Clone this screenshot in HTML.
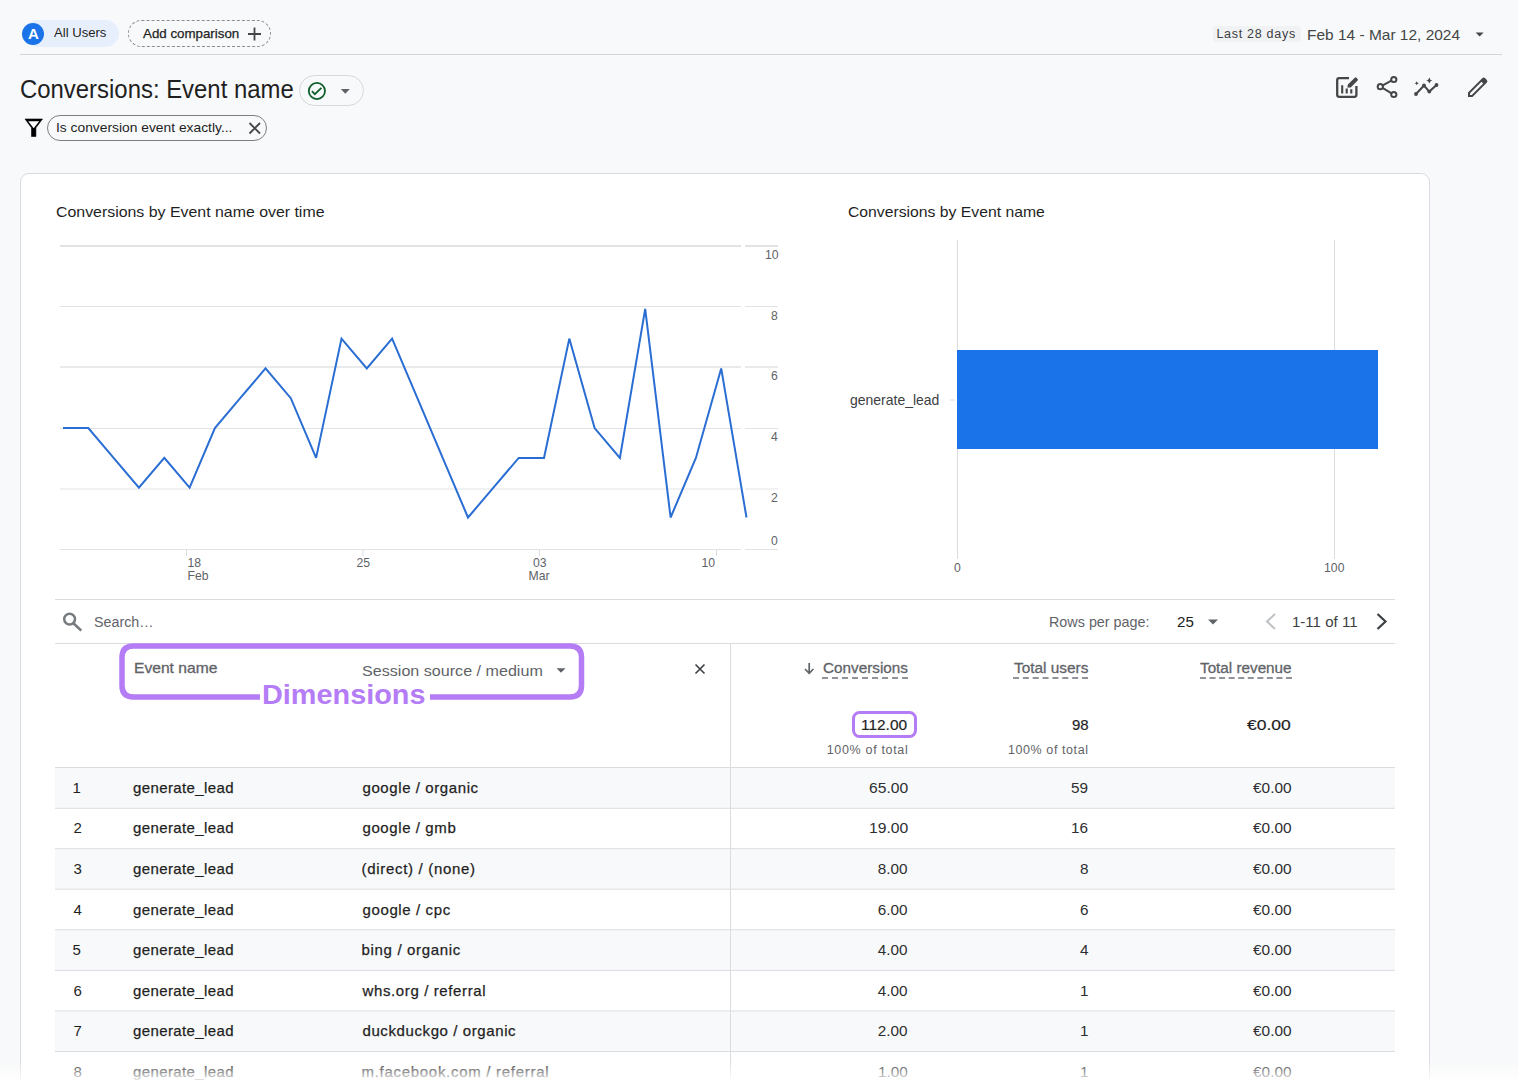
<!DOCTYPE html>
<html><head><meta charset="utf-8">
<style>
html,body{margin:0;padding:0;width:1518px;height:1092px;overflow:hidden;background:#f8f9fa;}
body{position:relative;font-family:"Liberation Sans",sans-serif;}
.t{position:absolute;white-space:nowrap;line-height:1;transform-origin:0 0;}
.a{position:absolute;}
svg{position:absolute;left:0;top:0;}
</style></head><body>
<!-- header -->
<div class="a" style="left:24px;top:20px;width:95px;height:27px;border-radius:14px;background:#e8effc;"></div>
<div class="a" style="left:22px;top:22.7px;width:22px;height:22px;border-radius:50%;background:#1a73e8;"></div>
<div class="a" style="left:128px;top:20px;width:141px;height:25px;border-radius:14px;border:1px dashed #8a8d91;"></div>
<div class="a" style="left:20px;top:54px;width:1482px;height:1px;background:#d3d5d8;"></div>
<div class="a" style="left:1213px;top:26px;width:88px;height:16px;background:#f1f2f4;border-radius:2px;"></div>
<!-- title pill -->
<div class="a" style="left:298.5px;top:75px;width:63px;height:29px;border-radius:16px;border:1px solid #d6d8dc;"></div>
<!-- filter chip -->
<div class="a" style="left:47px;top:115px;width:218px;height:24px;border-radius:13px;border:1px solid #7c7f83;"></div>
<!-- card -->
<div class="a" style="left:20px;top:173px;width:1408px;height:1000px;border-radius:9px;border:1px solid #d9dbde;background:#fff;"></div>
<svg width="1518" height="1092" viewBox="0 0 1518 1092">
  <!-- header icons -->
  <g stroke="#444746" stroke-width="1.8" fill="none" stroke-linecap="butt">
    <path d="M248 34H261M254.5 27.5V40.5"/>
  </g>
  <path d="M1475.6 32.5L1483.6 32.5L1479.6 36.5Z" fill="#444746"/>
  <!-- check circle -->
  <circle cx="316.9" cy="91" r="8.1" stroke="#0f5f2c" stroke-width="1.8" fill="none"/>
  <path d="M311.9 91.2L314.8 94.2L321.4 87.8" stroke="#0f5f2c" stroke-width="1.8" fill="none"/>
  <path d="M340.8 89L349.8 89L345.3 93.7Z" fill="#5f6368"/>
  <!-- funnel -->
  <path d="M25 119H42.5L35.9 127.8V136.5H31.5V127.8Z" fill="#000" stroke="#000" stroke-width="0.6" stroke-linejoin="round"/>
  <path d="M28.2 121.2H39.2L33.7 128.2Z" fill="#fff"/>
  <!-- chip x -->
  <path d="M249.5 123L260 133.5M260 123L249.5 133.5" stroke="#444746" stroke-width="1.8"/>
  <!-- right icons -->
  <g fill="none" stroke="#444746" stroke-width="2.3" stroke-linejoin="round">
    <path d="M1349 78.2H1339.2Q1337.2 78.2 1337.2 80.2V94.8Q1337.2 96.8 1339.2 96.8H1354.4Q1356.4 96.8 1356.4 94.8V86"/>
    <path d="M1342.2 85.3V93.4M1346.7 88.6V93.4M1351.3 89.3V93.4" stroke-width="2.1" stroke-linejoin="miter"/>
  </g>
  <path d="M1347.3 87.6L1347.9 84.6L1354.8 77.7Q1355.6 76.9 1356.4 77.7L1357.6 78.9Q1358.4 79.7 1357.6 80.5L1350.7 87.4Z" fill="#444746"/>
  <g fill="none" stroke="#444746" stroke-width="2">
    <path d="M1380.5 86.7L1393.6 79.3M1380.5 86.7L1393.6 94.7"/>
    <circle cx="1393.8" cy="79.5" r="2.6" fill="#f8f9fa"/>
    <circle cx="1380.3" cy="86.7" r="2.6" fill="#f8f9fa"/>
    <circle cx="1393.8" cy="94.5" r="2.6" fill="#f8f9fa"/>
  </g>
  <g fill="#444746" stroke="#444746">
    <path d="M1416 94L1424 85.5L1429.3 91.6L1436.5 85" fill="none" stroke-width="2"/>
    <circle cx="1416" cy="94" r="1.9" stroke="none"/>
    <circle cx="1424" cy="85.5" r="1.9" stroke="none"/>
    <circle cx="1429.3" cy="91.6" r="1.9" stroke="none"/>
    <circle cx="1436.5" cy="85" r="1.9" stroke="none"/>
    <path d="M1429.3 77.5Q1429.8 80 1432.3 80.5Q1429.8 81 1429.3 83.5Q1428.8 81 1426.3 80.5Q1428.8 80 1429.3 77.5Z" stroke="none"/>
    <path d="M1416.7 81.2Q1417 82.9 1418.7 83.2Q1417 83.5 1416.7 85.2Q1416.4 83.5 1414.7 83.2Q1416.4 82.9 1416.7 81.2Z" stroke="none"/>
  </g>
  <path d="M1468 97V92.5L1482.2 78.3Q1483.7 76.8 1485.2 78.3L1486.7 79.8Q1488.2 81.3 1486.7 82.8L1472.5 97Z" fill="#444746"/>
  <path d="M1470 95V93.3L1481.5 81.8L1483.2 83.5L1471.7 95Z" fill="#f8f9fa"/>

  <!-- line chart grid -->
  <g stroke="#e2e3e5" stroke-width="1" fill="none">
    <path d="M60 246H741M745 246H778" stroke-width="2"/>
    <path d="M60 306.5H741M745 306.5H778"/>
    <path d="M60 367H741M745 367H778" stroke-width="1.6"/>
    <path d="M60 428.5H741M745 428.5H778"/>
    <path d="M60 489H741M745 489H778"/>
    <path d="M60 549.5H741M745 549.5H778"/>
    <path d="M186.5 550V556M363 550V556M539.5 550V556M716.5 550V556" stroke="#dadce0"/>
  </g>
  <polyline points="63.0,428.1 88.3,428.1 113.6,457.9 138.9,487.7 164.3,457.9 189.6,487.7 214.9,428.1 240.2,398.2 265.5,368.4 290.8,398.2 316.1,457.9 341.5,338.6 366.8,368.4 392.1,338.6 417.4,398.2 442.7,457.9 468.0,517.5 493.4,487.7 518.7,457.9 544.0,457.9 569.3,338.6 594.6,428.1 619.9,457.9 645.2,308.8 670.6,517.5 695.9,457.9 721.2,368.4 746.5,517.5" fill="none" stroke="#2a6dd3" stroke-width="2" stroke-linejoin="miter" stroke-miterlimit="2.5"/>
  <!-- bar chart -->
  <g stroke="#dadce0" stroke-width="1">
    <path d="M957.5 240V559M1334.5 240V559M950 400H955"/>
  </g>
  <rect x="957" y="350" width="421" height="99" fill="#1a73e8"/>
  <!-- table -->
  <g stroke="#dadce0" stroke-width="1" fill="none">
    <path d="M55 599.5H1395M55 643.5H1395"/>
  </g>
  <rect x="55" y="768" width="1340" height="40" fill="#f8f9fa"/>
  <rect x="55" y="849" width="1340" height="40" fill="#f8f9fa"/>
  <rect x="55" y="930" width="1340" height="40.5" fill="#f8f9fa"/>
  <rect x="55" y="1011.5" width="1340" height="40" fill="#f8f9fa"/>
  <g stroke="#dadce0" stroke-width="1" fill="none">
    <path d="M55 767.5H1395M55 808.3H1395M55 848.7H1395M55 889.2H1395M55 929.8H1395M55 970.4H1395M55 1011H1395M55 1051.5H1395"/>
    <path d="M730.5 643V1092"/>
  </g>
  <!-- search icon -->
  <circle cx="69.6" cy="619.1" r="5.4" stroke="#777b7f" stroke-width="2.5" fill="none"/>
  <path d="M73.4 623.2L81.3 630.6" stroke="#777b7f" stroke-width="2.6"/>
  <!-- rows caret -->
  <path d="M1208 619.5H1218L1213 624.5Z" fill="#5f6368"/>
  <path d="M1275 614L1267 621.5L1275 629" stroke="#bdc1c6" stroke-width="2" fill="none"/>
  <path d="M1377.5 614L1385.5 621.5L1377.5 629" stroke="#3c4043" stroke-width="2.2" fill="none"/>
  <!-- header -->
  <path d="M556.5 668.2H565.5L561 672.7Z" fill="#5f6368"/>
  <path d="M695.5 664.5L704.5 673.5M704.5 664.5L695.5 673.5" stroke="#3c4043" stroke-width="1.6"/>
  <path d="M809.2 663V673M805 669L809.2 673.3L813.4 669" stroke="#5f6368" stroke-width="1.7" fill="none"/>
  <!-- purple annotation -->
  <path d="M260 697H133.5Q122 697 122 685.5V657.5Q122 646 133.5 646H570Q581.5 646 581.5 657.5V685.5Q581.5 697 570 697H430" fill="none" stroke="#b47cf5" stroke-width="5.5"/>
  <rect x="853.5" y="712.5" width="62" height="24" rx="6" fill="none" stroke="#b47cf5" stroke-width="3"/>
</svg>
<div class="a" style="left:822px;top:677px;width:86px;height:0;border-bottom:2px dashed #90949a;"></div>
<div class="a" style="left:1013px;top:677px;width:75px;height:0;border-bottom:2px dashed #90949a;"></div>
<div class="a" style="left:1200px;top:677px;width:92px;height:0;border-bottom:2px dashed #90949a;"></div>
<div class=t style="left:53.80px;top:26px;font-size:13.3px;color:#1f1f1f;transform:scaleX(0.9849);">All Users</div>
<div class=t style="left:28.00px;top:26px;font-size:15px;font-weight:bold;color:#fff;">A</div>
<div class=t style="left:142.70px;top:27px;font-size:13px;color:#1f1f1f;-webkit-text-stroke:0.25px #1f1f1f;transform:scaleX(1.0245);">Add comparison</div>
<div class=t style="left:1216.40px;top:28px;font-size:12.5px;color:#3c4043;letter-spacing:0.718px;">Last 28 days</div>
<div class=t style="left:1306.67px;top:27px;font-size:15px;color:#444746;transform:scaleX(1.0313);">Feb 14 - Mar 12, 2024</div>
<div class=t style="left:20.04px;top:77px;font-size:25px;color:#1f1f1f;transform:scaleX(0.9563);">Conversions: Event name</div>
<div class=t style="left:55.96px;top:121px;font-size:13.3px;color:#1f1f1f;transform:scaleX(1.0393);">Is conversion event exactly...</div>
<div class=t style="left:56.00px;top:204px;font-size:15px;color:#1f1f1f;transform:scaleX(1.0593);">Conversions by Event name over time</div>
<div class=t style="left:847.80px;top:204px;font-size:15px;color:#1f1f1f;transform:scaleX(1.0487);">Conversions by Event name</div>
<div class=t style="left:765.00px;top:249px;font-size:12.2px;color:#5f6368;">10</div>
<div class=t style="left:771.00px;top:310px;font-size:12.2px;color:#5f6368;">8</div>
<div class=t style="left:771.00px;top:370px;font-size:12.2px;color:#5f6368;">6</div>
<div class=t style="left:771.00px;top:431px;font-size:12.2px;color:#5f6368;">4</div>
<div class=t style="left:771.00px;top:492px;font-size:12.2px;color:#5f6368;">2</div>
<div class=t style="left:771.00px;top:535px;font-size:12.2px;color:#5f6368;">0</div>
<div class=t style="left:187.50px;top:557px;font-size:12.2px;color:#5f6368;">18</div>
<div class=t style="left:187.50px;top:570px;font-size:12.2px;color:#5f6368;">Feb</div>
<div class=t style="left:356.50px;top:557px;font-size:12.2px;color:#5f6368;">25</div>
<div class=t style="left:533.00px;top:557px;font-size:12.2px;color:#5f6368;">03</div>
<div class=t style="left:528.50px;top:570px;font-size:12.2px;color:#5f6368;">Mar</div>
<div class=t style="left:701.50px;top:557px;font-size:12.2px;color:#5f6368;">10</div>
<div class=t style="left:850.00px;top:393px;font-size:14.5px;color:#3c4043;transform:scaleX(0.9641);">generate_lead</div>
<div class=t style="left:954.00px;top:562px;font-size:12.2px;color:#5f6368;">0</div>
<div class=t style="left:1324.10px;top:562px;font-size:12.2px;color:#5f6368;">100</div>
<div class=t style="left:94.07px;top:614px;font-size:15.3px;color:#5f6368;transform:scaleX(0.9344);">Search…</div>
<div class=t style="left:1049.01px;top:615px;font-size:14.5px;color:#5f6368;transform:scaleX(0.9900);">Rows per page:</div>
<div class=t style="left:1177.00px;top:615px;font-size:14.5px;color:#202124;transform:scaleX(1.0438);">25</div>
<div class=t style="left:1291.96px;top:615px;font-size:14.5px;color:#3c4043;transform:scaleX(1.0371);">1-11 of 11</div>
<div class=t style="left:134.22px;top:661px;font-size:14.5px;color:#5f6368;-webkit-text-stroke:0.3px #5f6368;transform:scaleX(1.0776);">Event name</div>
<div class=t style="left:361.96px;top:663px;font-size:15.5px;color:#5f6368;transform:scaleX(1.0390);">Session source / medium</div>
<div class=t style="left:823.00px;top:660px;font-size:15.5px;color:#5f6368;-webkit-text-stroke:0.3px #5f6368;transform:scaleX(0.9860);">Conversions</div>
<div class=t style="left:1013.60px;top:660px;font-size:15.5px;color:#5f6368;-webkit-text-stroke:0.3px #5f6368;transform:scaleX(0.9920);">Total users</div>
<div class=t style="left:1200.40px;top:660px;font-size:15.5px;color:#5f6368;-webkit-text-stroke:0.3px #5f6368;transform:scaleX(0.9839);">Total revenue</div>
<div class=t style="left:860.97px;top:717px;font-size:15px;color:#1f1f1f;-webkit-text-stroke:0.2px #1f1f1f;transform:scaleX(1.0295);">112.00</div>
<div class=t style="left:1072.00px;top:717px;font-size:15px;color:#1f1f1f;-webkit-text-stroke:0.2px #1f1f1f;">98</div>
<div class=t style="left:1247.00px;top:717px;font-size:15px;color:#1f1f1f;-webkit-text-stroke:0.2px #1f1f1f;transform:scaleX(1.1684);">€0.00</div>
<div class=t style="left:826.70px;top:744px;font-size:12.5px;color:#5f6368;letter-spacing:0.675px;">100% of total</div>
<div class=t style="left:1008.00px;top:744px;font-size:12.5px;color:#5f6368;letter-spacing:0.583px;">100% of total</div>
<div class=t style="left:262.28px;top:680px;font-size:28.5px;font-weight:bold;color:#b47cf5;transform:scaleX(1.0119);">Dimensions</div>
<div class=t style="left:72.50px;top:780px;font-size:15px;color:#1f1f1f;">1</div>
<div class=t style="left:133.00px;top:780px;font-size:15px;color:#1f1f1f;-webkit-text-stroke:0.25px #1f1f1f;letter-spacing:0.383px;">generate_lead</div>
<div class=t style="left:362.50px;top:780px;font-size:15px;color:#1f1f1f;-webkit-text-stroke:0.25px #1f1f1f;letter-spacing:0.587px;">google / organic</div>
<div class=t style="left:868.80px;top:780px;font-size:15.3px;color:#2d2e31;transform:scaleX(1.0237);">65.00</div>
<div class=t style="left:1071.00px;top:780px;font-size:15.3px;color:#2d2e31;">59</div>
<div class=t style="left:1253.00px;top:780px;font-size:15.3px;color:#2d2e31;transform:scaleX(1.0079);">€0.00</div>
<div class=t style="left:73.50px;top:820px;font-size:15px;color:#1f1f1f;">2</div>
<div class=t style="left:133.00px;top:820px;font-size:15px;color:#1f1f1f;-webkit-text-stroke:0.25px #1f1f1f;letter-spacing:0.383px;">generate_lead</div>
<div class=t style="left:362.50px;top:820px;font-size:15px;color:#1f1f1f;-webkit-text-stroke:0.25px #1f1f1f;letter-spacing:0.591px;">google / gmb</div>
<div class=t style="left:868.67px;top:820px;font-size:15.3px;color:#2d2e31;transform:scaleX(1.0270);">19.00</div>
<div class=t style="left:1071.00px;top:820px;font-size:15.3px;color:#2d2e31;">16</div>
<div class=t style="left:1253.00px;top:820px;font-size:15.3px;color:#2d2e31;transform:scaleX(1.0079);">€0.00</div>
<div class=t style="left:73.50px;top:861px;font-size:15px;color:#1f1f1f;">3</div>
<div class=t style="left:133.00px;top:861px;font-size:15px;color:#1f1f1f;-webkit-text-stroke:0.25px #1f1f1f;letter-spacing:0.383px;">generate_lead</div>
<div class=t style="left:361.50px;top:861px;font-size:15px;color:#1f1f1f;-webkit-text-stroke:0.25px #1f1f1f;letter-spacing:0.688px;">(direct) / (none)</div>
<div class=t style="left:877.70px;top:861px;font-size:15.3px;color:#2d2e31;">8.00</div>
<div class=t style="left:1080.00px;top:861px;font-size:15.3px;color:#2d2e31;">8</div>
<div class=t style="left:1253.00px;top:861px;font-size:15.3px;color:#2d2e31;transform:scaleX(1.0079);">€0.00</div>
<div class=t style="left:73.50px;top:902px;font-size:15px;color:#1f1f1f;">4</div>
<div class=t style="left:133.00px;top:902px;font-size:15px;color:#1f1f1f;-webkit-text-stroke:0.25px #1f1f1f;letter-spacing:0.383px;">generate_lead</div>
<div class=t style="left:362.50px;top:902px;font-size:15px;color:#1f1f1f;-webkit-text-stroke:0.25px #1f1f1f;letter-spacing:0.618px;">google / cpc</div>
<div class=t style="left:877.70px;top:902px;font-size:15.3px;color:#2d2e31;">6.00</div>
<div class=t style="left:1080.00px;top:902px;font-size:15.3px;color:#2d2e31;">6</div>
<div class=t style="left:1253.00px;top:902px;font-size:15.3px;color:#2d2e31;transform:scaleX(1.0079);">€0.00</div>
<div class=t style="left:72.50px;top:942px;font-size:15px;color:#1f1f1f;">5</div>
<div class=t style="left:133.00px;top:942px;font-size:15px;color:#1f1f1f;-webkit-text-stroke:0.25px #1f1f1f;letter-spacing:0.383px;">generate_lead</div>
<div class=t style="left:361.50px;top:942px;font-size:15px;color:#1f1f1f;-webkit-text-stroke:0.25px #1f1f1f;letter-spacing:0.677px;">bing / organic</div>
<div class=t style="left:877.70px;top:942px;font-size:15.3px;color:#2d2e31;">4.00</div>
<div class=t style="left:1080.00px;top:942px;font-size:15.3px;color:#2d2e31;">4</div>
<div class=t style="left:1253.00px;top:942px;font-size:15.3px;color:#2d2e31;transform:scaleX(1.0079);">€0.00</div>
<div class=t style="left:73.50px;top:983px;font-size:15px;color:#1f1f1f;">6</div>
<div class=t style="left:133.00px;top:983px;font-size:15px;color:#1f1f1f;-webkit-text-stroke:0.25px #1f1f1f;letter-spacing:0.383px;">generate_lead</div>
<div class=t style="left:362.50px;top:983px;font-size:15px;color:#1f1f1f;-webkit-text-stroke:0.25px #1f1f1f;letter-spacing:0.618px;">whs.org / referral</div>
<div class=t style="left:877.70px;top:983px;font-size:15.3px;color:#2d2e31;">4.00</div>
<div class=t style="left:1080.00px;top:983px;font-size:15.3px;color:#2d2e31;">1</div>
<div class=t style="left:1253.00px;top:983px;font-size:15.3px;color:#2d2e31;transform:scaleX(1.0079);">€0.00</div>
<div class=t style="left:73.50px;top:1023px;font-size:15px;color:#1f1f1f;">7</div>
<div class=t style="left:133.00px;top:1023px;font-size:15px;color:#1f1f1f;-webkit-text-stroke:0.25px #1f1f1f;letter-spacing:0.383px;">generate_lead</div>
<div class=t style="left:362.50px;top:1023px;font-size:15px;color:#1f1f1f;-webkit-text-stroke:0.25px #1f1f1f;letter-spacing:0.595px;">duckduckgo / organic</div>
<div class=t style="left:877.70px;top:1023px;font-size:15.3px;color:#2d2e31;">2.00</div>
<div class=t style="left:1080.00px;top:1023px;font-size:15.3px;color:#2d2e31;">1</div>
<div class=t style="left:1253.00px;top:1023px;font-size:15.3px;color:#2d2e31;transform:scaleX(1.0079);">€0.00</div>
<div class=t style="left:73.50px;top:1064px;font-size:15px;color:#1f1f1f;">8</div>
<div class=t style="left:133.00px;top:1064px;font-size:15px;color:#1f1f1f;-webkit-text-stroke:0.25px #1f1f1f;letter-spacing:0.383px;">generate_lead</div>
<div class=t style="left:361.50px;top:1064px;font-size:15px;color:#1f1f1f;-webkit-text-stroke:0.25px #1f1f1f;letter-spacing:0.708px;">m.facebook.com / referral</div>
<div class=t style="left:877.60px;top:1064px;font-size:15.3px;color:#2d2e31;transform:scaleX(1.0034);">1.00</div>
<div class=t style="left:1080.00px;top:1064px;font-size:15.3px;color:#2d2e31;">1</div>
<div class=t style="left:1253.00px;top:1064px;font-size:15.3px;color:#2d2e31;transform:scaleX(1.0079);">€0.00</div>
<div class="a" style="left:0;top:1060px;width:1518px;height:32px;background:linear-gradient(to bottom,rgba(255,255,255,0) 0px,#fff 23px,#fff 32px);"></div>
</body></html>
